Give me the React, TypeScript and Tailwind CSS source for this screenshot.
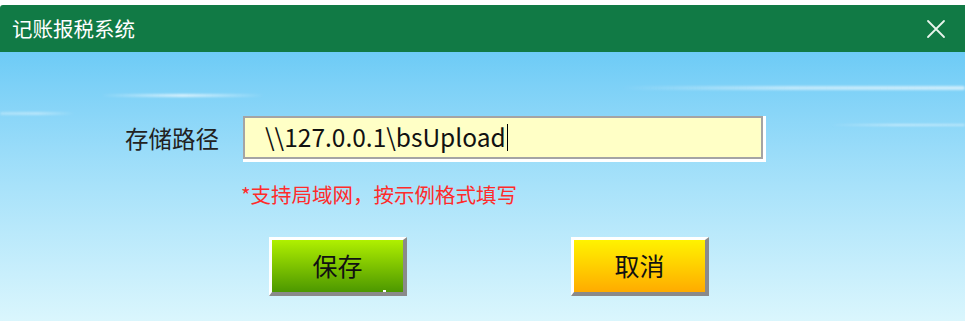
import React from "react";

const cjk = { fontFamily: '"Noto Sans CJK SC", "Noto Sans", sans-serif' };

export default function App() {
  return (
    <div className="w-[970px] h-[321px] bg-white pt-[5px] pr-[5px]" style={cjk}>
      <div className="flex flex-col h-[316px] overflow-hidden rounded-tl-[3px]">
        <div className="h-[47px] bg-[#117a45] flex items-center justify-between pl-[12px] pr-[18px] shrink-0">
          <span className="text-white text-[20.5px] leading-none">记账报税系统</span>
          <svg width="20" height="20" viewBox="0 0 20 20" className="mr-[1px]">
            <path d="M2 2 L18 18 M18 2 L2 18" stroke="#e8f5ec" strokeWidth="1.8" strokeLinecap="round" />
          </svg>
        </div>
        <div className="relative flex-1 bg-gradient-to-b from-[#6dcbf6] via-[#a8e2fa] to-[#daf6fd]">
          <div className="absolute left-[100px] top-[42px] w-[165px] h-[3px] rounded-full bg-gradient-to-r from-transparent via-white/70 to-transparent blur-[1px]" />
          <div className="absolute left-[0px] top-[60px] w-[75px] h-[3px] rounded-full bg-gradient-to-r from-white/30 via-white/40 to-transparent blur-[1px]" />
          <div className="absolute left-[620px] top-[34px] w-[345px] h-[4px] rounded-full bg-gradient-to-r from-transparent via-white/50 to-white/60 blur-[1px]" />
          <div className="absolute left-[830px] top-[72px] w-[135px] h-[2px] rounded-full bg-gradient-to-r from-transparent via-white/50 to-white/40 blur-[1px]" />

          <div className="relative flex flex-col pt-[64px]">
            <div className="flex items-center">
              <span className="ml-[125px] w-[118px] text-[23.5px] text-[#222] leading-none">存储路径</span>
              <div className="border-b-[3px] border-r-[3px] border-white">
                <div className="w-[520px] h-[43px] border-2 border-[#a4a4a4] bg-[#ffffc6] flex items-center pl-[20px]">
                  <span className="text-[24.5px] text-[#111] leading-none" style={cjk}>\\127.0.0.1\bsUpload</span>
                  <span className="w-[1.5px] h-[27px] bg-black ml-[1px]" />
                </div>
              </div>
            </div>
            <div className="ml-[241px] mt-[22px] text-[20.5px] text-[#ff2b2b] leading-none">*支持局域网，按示例格式填写</div>
            <div className="flex mt-[32px] ml-[269px] gap-[164px]">
              <button className="relative w-[138px] h-[59px] border-t-[3px] border-l-[3px] border-white border-b-[4px] border-r-[4px] border-b-[#8a8a8a] border-r-[#8a8a8a] bg-gradient-to-b from-[#b0f000] to-[#4c9800] text-[25px] text-[#111] flex items-center justify-center">
                保存
                <span className="absolute left-[111px] bottom-0 w-[3px] h-[2px] bg-white" />
              </button>
              <button className="w-[138px] h-[59px] border-t-[3px] border-l-[3px] border-white border-b-[4px] border-r-[4px] border-b-[#8a8a8a] border-r-[#8a8a8a] bg-gradient-to-b from-[#fff300] to-[#ffab00] text-[25px] text-[#111] flex items-center justify-center">取消</button>
            </div>
          </div>
        </div>
      </div>
    </div>
  );
}
